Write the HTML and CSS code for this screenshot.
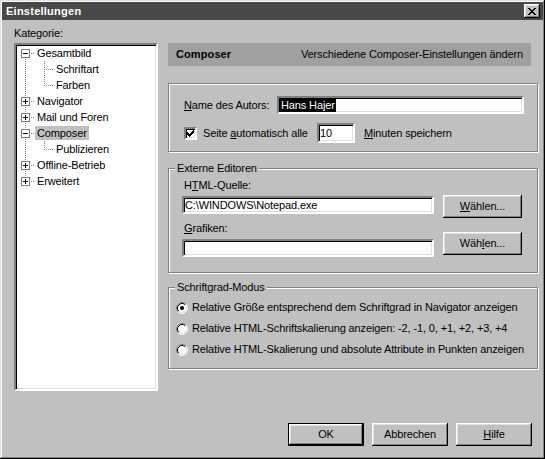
FILE: index.html
```html
<!DOCTYPE html>
<html lang="de">
<head>
<meta charset="utf-8">
<title>Einstellungen</title>
<link rel="stylesheet" href="styles.css">
</head>
<body>
<div class="window">
  <div class="titlebar">
    <span class="title">Einstellungen</span>
    <span class="close">
      <svg width="8" height="7" viewBox="0 0 8 7" shape-rendering="crispEdges"><path fill="#000" d="M0 0h2v1H0z M6 0h2v1H6z M1 1h2v1H1z M5 1h2v1H5z M2 2h4v1H2z M3 3h2v1H3z M2 4h4v1H2z M1 5h2v1H1z M5 5h2v1H5z M0 6h2v1H0z M6 6h2v1H6z"/></svg>
    </span>
  </div>

  <div class="main">
    <div class="left">
      <div class="cat-label">Kategorie:</div>
      <div class="tree">
        <div class="row"><span class="cell tl-first"><span class="exp minus"></span></span><span class="lbl">Gesamtbild</span></div>
        <div class="row"><span class="cell pass"></span><span class="cell ch-mid"></span><span class="lbl">Schriftart</span></div>
        <div class="row"><span class="cell pass"></span><span class="cell ch-last"></span><span class="lbl">Farben</span></div>
        <div class="row"><span class="cell tl-mid"><span class="exp plus"></span></span><span class="lbl">Navigator</span></div>
        <div class="row"><span class="cell tl-mid"><span class="exp plus"></span></span><span class="lbl">Mail und Foren</span></div>
        <div class="row"><span class="cell tl-mid"><span class="exp minus"></span></span><span class="lbl sel">Composer</span></div>
        <div class="row"><span class="cell pass"></span><span class="cell ch-last"></span><span class="lbl">Publizieren</span></div>
        <div class="row"><span class="cell tl-mid"><span class="exp plus"></span></span><span class="lbl">Offline-Betrieb</span></div>
        <div class="row"><span class="cell tl-last"><span class="exp plus"></span></span><span class="lbl">Erweitert</span></div>
      </div>
    </div>

    <div class="right">
      <div class="header">
        <span class="header-title">Composer</span>
        <span class="header-desc">Verschiedene Composer-Einstellungen ändern</span>
      </div>

      <fieldset class="group g1">
        <div class="name-row">
          <span class="name-label"><u>N</u>ame des Autors:</span>
          <div class="field name-field"><span class="selected">Hans Hajer</span></div>
        </div>
        <div class="save-row">
          <span class="checkbox">
            <svg width="7" height="7" viewBox="0 0 7 7" shape-rendering="crispEdges"><path fill="#000" d="M6 0h1v1h-1z M5 1h2v1h-2z M0 2h1v1H0z M4 2h3v1H4z M0 3h2v1H0z M3 3h3v1H3z M0 4h5v1H0z M1 5h3v1H1z M2 6h1v1H2z"/></svg>
          </span>
          <span class="save-label">Seite <u>a</u>utomatisch alle</span>
          <div class="field min-field">10</div>
          <span class="min-label"><u>M</u>inuten speichern</span>
        </div>
      </fieldset>

      <fieldset class="group g2">
        <legend>Externe Editoren</legend>
        <div class="editor-block first">
          <div class="editor-col">
            <span class="editor-label">H<u>T</u>ML-Quelle:</span>
            <div class="field editor-field">C:\WINDOWS\Notepad.exe</div>
          </div>
          <button class="btn choose choose1"><u>W</u>ählen...</button>
        </div>
        <div class="editor-block second">
          <div class="editor-col">
            <span class="editor-label"><u>G</u>rafiken:</span>
            <div class="field editor-field"></div>
          </div>
          <button class="btn choose choose2">Wäh<u>l</u>en...</button>
        </div>
      </fieldset>

      <fieldset class="group g3">
        <legend>Schriftgrad-Modus</legend>
        <div class="radio-row">
          <svg class="radio" width="12" height="12" viewBox="0 0 12 12"><circle cx="6" cy="6" r="5" fill="#fff"/><path d="M2.11 9.89A5.5 5.5 0 0 1 9.89 2.11" fill="none" stroke="#808080"/><path d="M9.89 2.11A5.5 5.5 0 0 1 2.11 9.89" fill="none" stroke="#fff"/><path d="M2.82 9.18A4.5 4.5 0 0 1 9.18 2.82" fill="none" stroke="#000"/><path d="M9.18 2.82A4.5 4.5 0 0 1 2.82 9.18" fill="none" stroke="#dfdfdf"/><circle cx="6" cy="6" r="2" fill="#000"/></svg>
          <span>Relative Größe entsprechend dem Schriftgrad in Navigator anzeigen</span>
        </div>
        <div class="radio-row">
          <svg class="radio" width="12" height="12" viewBox="0 0 12 12"><circle cx="6" cy="6" r="5" fill="#fff"/><path d="M2.11 9.89A5.5 5.5 0 0 1 9.89 2.11" fill="none" stroke="#808080"/><path d="M9.89 2.11A5.5 5.5 0 0 1 2.11 9.89" fill="none" stroke="#fff"/><path d="M2.82 9.18A4.5 4.5 0 0 1 9.18 2.82" fill="none" stroke="#000"/><path d="M9.18 2.82A4.5 4.5 0 0 1 2.82 9.18" fill="none" stroke="#dfdfdf"/></svg>
          <span>Relative HTML-Schriftskalierung anzeigen: -2, -1, 0, +1, +2, +3, +4</span>
        </div>
        <div class="radio-row">
          <svg class="radio" width="12" height="12" viewBox="0 0 12 12"><circle cx="6" cy="6" r="5" fill="#fff"/><path d="M2.11 9.89A5.5 5.5 0 0 1 9.89 2.11" fill="none" stroke="#808080"/><path d="M9.89 2.11A5.5 5.5 0 0 1 2.11 9.89" fill="none" stroke="#fff"/><path d="M2.82 9.18A4.5 4.5 0 0 1 9.18 2.82" fill="none" stroke="#000"/><path d="M9.18 2.82A4.5 4.5 0 0 1 2.82 9.18" fill="none" stroke="#dfdfdf"/></svg>
          <span>Relative HTML-Skalierung und absolute Attribute in Punkten anzeigen</span>
        </div>
      </fieldset>
    </div>
  </div>

  <div class="footer">
    <button class="btn default">OK</button>
    <button class="btn">Abbrechen</button>
    <button class="btn"><u>H</u>ilfe</button>
  </div>
</div>
</body>
</html>
```

FILE: styles.css
```css
* { box-sizing: border-box; }

html, body {
  margin: 0;
  padding: 0;
}

body {
  width: 545px;
  height: 459px;
  overflow: hidden;
  background: #c0c0c0;
  font-family: "Liberation Sans", Arial, sans-serif;
  font-size: 11px;
  line-height: 13px;
  letter-spacing: -0.13px;
  color: #000;
}

u { text-decoration: underline; text-underline-offset: 1px; }

.window {
  width: 545px;
  height: 459px;
  padding: 2px;
  background: #c0c0c0;
  display: flex;
  flex-direction: column;
  box-shadow: inset -1px -1px #000, inset 1px 1px #dfdfdf, inset -2px -2px #808080, inset 2px 2px #fff;
}

/* Title bar */
.titlebar {
  flex: none;
  height: 18px;
  background: #484848;
  display: flex;
  align-items: center;
  justify-content: space-between;
  padding: 0 3px 0 4px;
}

.title {
  color: #fff;
  font-weight: bold;
  font-size: 11px;
  letter-spacing: 0.25px;
}

.close {
  width: 16px;
  height: 14px;
  background: #c0c0c0;
  display: flex;
  align-items: center;
  justify-content: center;
  box-shadow: inset -1px -1px #000, inset 1px 1px #fff, inset -2px -2px #808080, inset 2px 2px #dfdfdf;
}

.close svg { display: block; margin-left: -1px; }

/* Main area */
.main {
  flex: none;
  display: flex;
  gap: 10px;
  padding-left: 12px;
}

.left {
  width: 144px;
  padding-top: 7px;
}

.cat-label { height: 13px; }

.tree {
  margin-top: 3px;
  height: 348px;
  background: #fff;
  border: 2px solid;
  border-color: #808080 #fff #fff #808080;
  box-shadow: inset 1px 1px #000, inset -1px -1px #dfdfdf;
}

.row {
  height: 16px;
  display: flex;
  align-items: flex-start;
}

.cell {
  flex: none;
  width: 19px;
  height: 16px;
  background-repeat: no-repeat;
}

.tl-first {
  background:
    repeating-linear-gradient(to bottom, #808080 0 1px, transparent 1px 2px) 9px 8px / 1px 8px no-repeat,
    repeating-linear-gradient(to right, #808080 0 1px, transparent 1px 2px) 9px 8px / 10px 1px no-repeat;
}

.tl-mid {
  background:
    repeating-linear-gradient(to bottom, #808080 0 1px, transparent 1px 2px) 9px 0 / 1px 16px no-repeat,
    repeating-linear-gradient(to right, #808080 0 1px, transparent 1px 2px) 9px 8px / 10px 1px no-repeat;
}

.tl-last {
  background:
    repeating-linear-gradient(to bottom, #808080 0 1px, transparent 1px 2px) 9px 0 / 1px 9px no-repeat,
    repeating-linear-gradient(to right, #808080 0 1px, transparent 1px 2px) 9px 8px / 10px 1px no-repeat;
}

.pass {
  background: repeating-linear-gradient(to bottom, #808080 0 1px, transparent 1px 2px) 9px 0 / 1px 16px no-repeat;
}

.ch-mid {
  background:
    repeating-linear-gradient(to bottom, #808080 0 1px, transparent 1px 2px) 9px 0 / 1px 16px no-repeat,
    repeating-linear-gradient(to right, #808080 0 1px, transparent 1px 2px) 9px 8px / 10px 1px no-repeat;
}

.ch-last {
  background:
    repeating-linear-gradient(to bottom, #808080 0 1px, transparent 1px 2px) 9px 0 / 1px 9px no-repeat,
    repeating-linear-gradient(to right, #808080 0 1px, transparent 1px 2px) 9px 8px / 10px 1px no-repeat;
}

.exp {
  display: block;
  width: 9px;
  height: 9px;
  margin: 4px 0 0 5px;
  border: 1px solid #808080;
  background-color: #fff;
}

.exp.minus {
  background: #fff linear-gradient(#000, #000) 1px 3px / 5px 1px no-repeat;
}

.exp.plus {
  background:
    linear-gradient(#000, #000) 1px 3px / 5px 1px no-repeat,
    linear-gradient(#000, #000) 3px 1px / 1px 5px no-repeat,
    #fff;
}

.lbl {
  height: 14px;
  margin-top: 1px;
  line-height: 14px;
  padding: 0 2px;
  white-space: nowrap;
}

.lbl.sel { background: #c0c0c0; }

/* Right side */
.right {
  width: 371px;
  padding-top: 23px;
}

.header {
  width: 363px;
  height: 23px;
  background: #a0a0a0;
  display: flex;
  align-items: center;
  justify-content: space-between;
  padding: 0 8px;
}

.header-title { font-weight: bold; letter-spacing: 0.1px; }

.group {
  margin: 0;
  width: 370px;
  min-width: 0;
  border: 1px solid #808080;
  box-shadow: inset 1px 1px #fff, 1px 1px #fff;
}

.group legend {
  padding: 0 2px;
  margin: 0;
  line-height: 13px;
  background: #c0c0c0;
}

.g1 {
  margin-top: 17px;
  padding: 12px 0 8px 15px;
}

.name-row {
  height: 18px;
  display: flex;
  align-items: center;
}

.name-label { width: 93px; flex: none; }

.field {
  background: #fff;
  border: 2px solid;
  border-color: #808080 #fff #fff #808080;
  box-shadow: inset 1px 1px #000, inset -1px -1px #dfdfdf;
  padding: 0 1px;
  line-height: 14px;
  white-space: nowrap;
  overflow: hidden;
}

.name-field {
  width: 247px;
  height: 18px;
}

.selected {
  display: inline-block;
  background: #000;
  color: #fff;
  line-height: 14px;
  padding: 0 1px;
}

.save-row {
  margin-top: 9px;
  height: 20px;
  display: flex;
  align-items: center;
}

.checkbox {
  flex: none;
  width: 13px;
  height: 13px;
  margin-right: 6px;
  background: #fff;
  border: 2px solid;
  border-color: #808080 #fff #fff #808080;
  box-shadow: inset 1px 1px #000, inset -1px -1px #dfdfdf;
  display: flex;
  align-items: center;
  justify-content: center;
}

.checkbox svg { display: block; }

.save-label { width: 114px; flex: none; }

.min-field {
  width: 38px;
  height: 20px;
  line-height: 16px;
  flex: none;
}

.min-label { margin-left: 9px; }

.g2 {
  margin-top: 10px;
  padding: 4px 0 15px 6px;
}

.editor-block {
  display: flex;
  align-items: flex-start;
  padding-left: 7px;
}

.editor-block.second { margin-top: 4px; }

.editor-col {
  width: 252px;
  display: flex;
  flex-direction: column;
}

.editor-label { margin-left: 2px; height: 13px; }

.editor-field {
  margin-top: 4px;
  height: 18px;
}

.btn {
  font-family: inherit;
  font-size: 11px;
  line-height: 13px;
  letter-spacing: -0.13px;
  color: #000;
  background: #c0c0c0;
  border: none;
  padding: 0;
  margin: 0;
  height: 23px;
  box-shadow: inset -1px -1px #000, inset 1px 1px #fff, inset -2px -2px #808080, inset 2px 2px #dfdfdf;
}

.choose {
  width: 79px;
  margin-left: 9px;
}

.choose1 { margin-top: 16px; }
.choose2 { margin-top: 10px; }

.g3 {
  margin-top: 8px;
  padding: 3px 0 8px 6px;
}

.radio-row {
  height: 21px;
  display: flex;
  align-items: center;
  padding-left: 1px;
  white-space: nowrap;
}

.radio {
  flex: none;
  display: block;
  margin-right: 4px;
}

/* Footer */
.footer {
  flex: none;
  margin-top: 32px;
  display: flex;
  justify-content: flex-end;
  gap: 8px;
  padding-right: 11px;
}

.footer .btn { width: 76px; }

.btn.default {
  border: 1px solid #000;
}
```
